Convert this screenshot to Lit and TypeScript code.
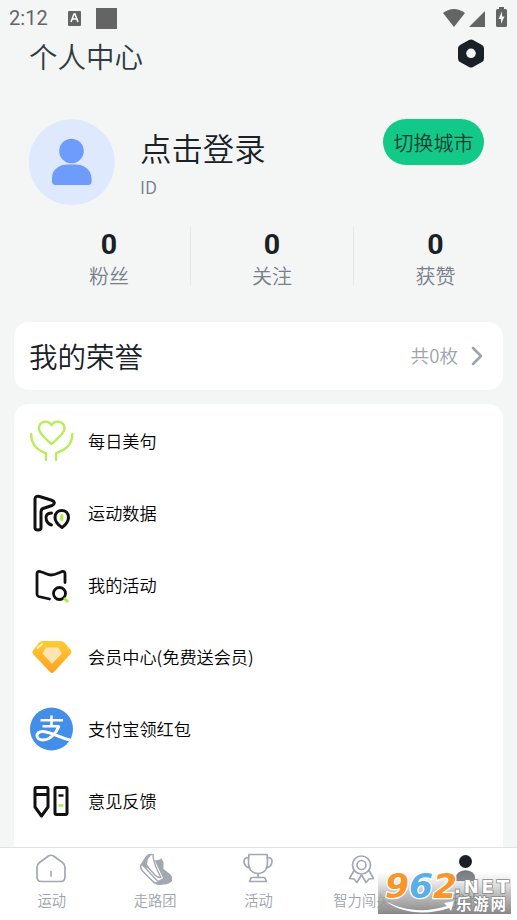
import { LitElement, html, css, svg } from "lit";
import { customElement } from "lit/decorators.js";

const stats = ["粉丝", "关注", "获赞"];

const heart = svg`<g fill="none" stroke="#b5ee55" stroke-width="2.3" stroke-linecap="round" stroke-linejoin="round">
  <path d="M21.500 24Q20 23 14.500 17.500Q9 12 9 8.500C9 1.500 17.500 -1 21.500 5C25.500 -1 34.500 1.500 34.500 8.500Q34.500 12 28.500 17.500Q23 23 21.500 24Z"/>
  <path d="M1.200 14C1.200 25 8 30.500 16 33V40M42.300 14C42.300 25 34.500 30.500 26 33V40"/></g>`;
const route = svg`<g fill="none" stroke="#111" stroke-width="3" stroke-linecap="round" stroke-linejoin="round">
  <path d="M5 36V7C5 4.500 7 4 9.500 4.500L21 8C25 9.300 25.500 12 22 13.500L13 16.500C11.500 17 11 18 11 20V36C11 38.500 5 38.500 5 36Z"/>
  <path d="M21.500 21C16.500 21 15 24.500 16.500 28.500C17.500 31 19.500 32.500 21.500 33"/>
  <path d="M32 35.500C27.500 33 25 28.500 25 25.500C25 16 38.500 16 38.500 25.500C38.500 28.500 36 33 32 35.500Z"/></g>
  <path d="M31.800 23.500V27.500" stroke="#a8ec3c" stroke-width="3" stroke-linecap="round"/>`;
const activity = svg`<g fill="none" stroke="#111" stroke-width="2.800" stroke-linecap="round" stroke-linejoin="round">
  <path d="M19.500 35L8.500 32.500Q7 32 7 30V10Q7 7 10 7.500C17.500 10 17.500 11 21 11C25 11 26 10 32 7.500Q35 7 35 10V18.500"/>
  <circle cx="29.500" cy="29.500" r="6"/></g><path d="M34 34L38 38" stroke="#a8ec3c" stroke-width="2.800"/>`;
const gem = svg`<defs><linearGradient id="gold" x1="0" y1="0" x2="0" y2="1"><stop stop-color="#ffcc35"/><stop offset="1" stop-color="#faa11f"/></linearGradient></defs>
  <path d="M12 5H31Q33 5 34.500 6.500L41 14.500Q42 16 40.500 18L24 36Q22 38 20 36L3 18Q1.500 16 3 14.500L9 6.500Q10 5 12 5Z" fill="url(#gold)"/>
  <path d="M16 11.500H28L32 17.500L22 28L12.500 17.500Z" fill="#ffe3b1"/><path d="M7.500 12L12 8" stroke="#fff5c5" stroke-width="1.800" stroke-linecap="round"/>`;
const pay = svg`<defs><clipPath id="disc"><circle cx="21.500" cy="21" r="21.500"/></clipPath></defs><g clip-path="url(#disc)"><path d="M0 -1H44V44H0Z" fill="#438ee8"/>
  <g fill="none" stroke="#fff"><path d="M10.500 12.300H33M21.500 7.500V18.200M12.500 18.200H29.500" stroke-width="2.500"/>
  <path d="M29 18C26 26 19.500 32 13 32C5 32 5 23.500 12.500 23.500C20.500 23.500 27.500 29 44.500 33.500" stroke-width="3"/></g></g>`;
const pens = svg`<g fill="none" stroke="#111" stroke-width="3" stroke-linejoin="round">
  <path d="M5 9Q5 7.500 6.500 7.500H16.500Q18 7.500 18 9V27L11.500 36L5 27ZM5 14.500H18"/><rect x="25" y="7.500" width="12" height="27" rx="1.500"/></g>
  <path d="M28.500 15.500H33.500" stroke="#111" stroke-width="2.400"/><path d="M28.500 25.500H33.500" stroke="#a8ec3c" stroke-width="2.400"/>`;

const items = [
  { label: "每日美句", icon: heart },
  { label: "运动数据", icon: route },
  { label: "我的活动", icon: activity },
  { label: "会员中心(免费送会员)", icon: gem },
  { label: "支付宝领红包", icon: pay },
  { label: "意见反馈", icon: pens },
];

const tabs = [
  { label: "运动", icon: svg`<path d="M4.500 10.500L13.500 4Q16 2.500 18.500 4L27.500 10.500Q30 12.500 30 15.500V25Q30 29.500 25.500 29.500H6.500Q2 29.500 2 25V15.500Q2 12.500 4.500 10.500ZM16 19.500V24"/>` },
  { label: "走路团", icon: svg`<path d="M22.500 6.500L24.500 10L24.500 17L31 22C36 27 33 32 25 32.500Q19 33 16 31L24 26L15.500 8Q19 9 22.500 6.500Z" fill="#a2a8b2" stroke="none"/><path d="M13 2.500L11 2.500Q8 3 6 7L1.500 14Q1.500 17 3.500 19L15 30.500Q18 32.500 23 32" stroke-width="1.600"/><path d="M14 2.500Q14 11 22 25.500Q19 26 16 23L5 11" stroke-width="1.400"/><path d="M3.500 13L18 28.500Q21 31 26 30" stroke-width="1.400"/><path d="M6 7L3 13L5 15L11 17L8 12L9 7L12 3Q8 3 6 7Z" fill="#a2a8b2" stroke="none"/>` },
  { label: "活动", icon: svg`<path d="M7 2.500H25Q26.500 14 23.500 18Q20.500 21.500 16 21.500Q11.500 21.500 8.500 18Q5.500 14 7 2.500ZM7 5.500Q2 5.500 2 9C2 13.500 5 15.500 8 16M25 5.500Q30 5.500 30 9C30 13.500 27 15.500 24 16M16 21.500V25.500M7.500 29.500H24.500L23 26Q22.700 25.500 22 25.500H10Q9.300 25.500 9 26Z"/>` },
  { label: "智力闯关", icon: svg`<circle cx="16.500" cy="13" r="9"/><circle cx="16.500" cy="13" r="4.500"/><path d="M9 18.500L4.500 26.500L9 27L12 30.500L16 23.500M24 18.500L28.500 26.500L24 27L21 30.500L17 23.500"/>` },
  { label: "我的", icon: svg`<g fill="#192126" stroke="none"><circle cx="16.500" cy="9.500" r="6.500"/><path d="M7 29V26Q7 18.500 16.500 18.500Q26 18.500 26 26V29Z"/></g>`, active: true },
];

@customElement("app-root")
export class AppRoot extends LitElement {
  static styles = css`
    :host { display: flex; flex-direction: column; position: relative; height: 920px; overflow: hidden; background: #f4f6f5; color: #192126; font-family: "Noto Sans CJK SC", sans-serif; font-weight: 350; }
    * { box-sizing: border-box; }
    svg { display: block; flex: none; }
    .status { display: flex; align-items: center; height: 35px; padding: 0 7px 0 9px; color: #646464; font: 400 20px/35px Roboto, sans-serif; }
    .clock { width: 58px; letter-spacing: .1px; padding-top: 1px; }
    .right { margin-left: auto; }
    .header { display: flex; justify-content: space-between; height: 84px; padding: 0 31px 0 29px; }
    .title { font-size: 28.500px; line-height: 42px; color: #303b42; }
    .gear { margin-top: 3px; }
    .profile { display: flex; height: 87px; padding: 0 33px 0 28px; }
    .who { margin-left: 25px; flex: 1; }
    .name { font-size: 31.400px; line-height: 46px; margin-top: 6px; }
    .uid { font-size: 17.500px; line-height: 24px; margin-top: 4px; color: #777e8c; }
    .city { width: 101px; height: 46px; border-radius: 23px; background: #12c988; font-size: 20px; line-height: 47px; text-align: center; color: #1d3b33; }
    .stats { display: grid; grid-template-columns: repeat(3, 163px); margin: 21px 0 0 28px; height: 58px; }
    .stat { height: 58px; text-align: center; border-right: 1.500px solid #e5e7ea; }
    .stat:last-child { border: 0; }
    .num { font: 700 28.500px/35px Roboto, sans-serif; }
    .cap { font-size: 20px; line-height: 28px; color: #777e8c; }
    .honor { display: flex; align-items: center; height: 68px; margin: 37px 14px 14px; padding: 0 17px 0 15px; border-radius: 15px; background: #fff; }
    .honor-title { flex: 1; font-size: 28.500px; line-height: 68px; }
    .count { font-size: 18.600px; line-height: 28px; color: #9da3ae; margin: 0 11px 2px 0; }
    .list { flex: 1; min-height: 0; overflow: hidden; margin: 0 14px; padding-top: 1px; border-radius: 15px 15px 0 0; background: #fff; }
    .item { display: flex; align-items: center; height: 72px; padding-left: 16px; gap: 14px; font-size: 17.150px; color: #000; }
    .item span { margin-bottom: 2px; }
    .item svg { margin-top: 1px; }
    .tabs { display: grid; grid-template-columns: repeat(5, 1fr); height: 73px; background: #fff; border-top: 1px solid #dfe1e2; }
    .tab { display: flex; flex-direction: column; align-items: center; padding-top: 4px; font-size: 14.300px; line-height: 22px; color: #9da3ae; gap: 3.500px; }
    .tab.active { color: #192126; }
    .mark { position: absolute; left: 378px; top: 871px; }
    .digits { font: italic 700 34px "DejaVu Sans", sans-serif; }
    .net { font: 700 18px "DejaVu Sans", sans-serif; }
    .site { font: 700 15.500px "Noto Sans CJK SC", sans-serif; }
  `;

  render() {
    return html`
      <div class="status"><span class="clock">2:12</span>
        <svg width="50" height="22"><rect x="1" y="4" width="13" height="15" rx="1" fill="#646464"/><path d="M4 15L7 7H8L11 15M5.500 12H9.500" stroke="#fff" stroke-width="1.500" fill="none"/><path d="M29 1H50V22H29Z" fill="#646464"/></svg>
        <svg class="right" width="68" height="22" fill="#646464"><path d="M1 6Q12 -2 23 6L12 20Z"/><path d="M43 4V20H27Z"/><path d="M54 3.500Q54 2 55.500 2H57V0H62V2H63.500Q65 2 65 3.500V18.500Q65 20 63.500 20H55.500Q54 20 54 18.500Z"/><path d="M60 4.500L56.500 12H59V17L62.500 9.500H60Z" fill="#f4f6f5"/></svg>
      </div>
      <div class="header"><div class="title">个人中心</div>
        <svg class="gear" width="30" height="31"><path d="M13 2Q15 1 17 2L26 7Q28 8 28 10.500V20.500Q28 23 26 24L17 29Q15 30 13 29L4 24Q2 23 2 20.500V10.500Q2 8 4 7Z" fill="#192126"/><circle cx="15" cy="15.300" r="4.800" fill="#f4f6f5"/></svg>
      </div>
      <div class="profile">
        <svg width="87" height="87"><circle cx="43.800" cy="43.300" r="43" fill="#dee9fe"/><g fill="#6e9cfd"><circle cx="43.500" cy="32" r="12.300"/><path d="M24 59C24 50 32 45.500 39 45.500H48C55 45.500 63.500 50 63.500 60V63Q63.500 66 60 66H28Q24 66 24 63Z"/></g></svg>
        <div class="who"><div class="name">点击登录</div><div class="uid">ID</div></div>
        <div class="city">切换城市</div>
      </div>
      <div class="stats">${stats.map((s) => html`<div class="stat"><div class="num">0</div><div class="cap">${s}</div></div>`)}</div>
      <div class="honor"><div class="honor-title">我的荣誉</div><div class="count">共0枚</div>
        <svg width="17" height="22" fill="none" stroke="#9da3ae" stroke-width="2.500" stroke-linecap="round" stroke-linejoin="round"><path d="M4 3L12 11L4 19"/></svg></div>
      <div class="list">${items.map((i) => html`<div class="item"><svg width="44" height="44" viewBox="0 0 44 44" overflow="visible">${i.icon}</svg><span>${i.label}</span></div>`)}</div>
      <div class="tabs">${tabs.map((t) => html`<div class="tab ${t.active ? "active" : ""}"><svg width="33" height="33" viewBox="0 0 33 33" fill="none" stroke="#a2a8b2" stroke-width="1.700" stroke-linejoin="round" stroke-linecap="round">${t.icon}</svg><span>${t.label}</span></div>`)}</div>
      <svg class="mark" width="133" height="43" overflow="visible">
        <defs><linearGradient id="shade" x1="0" y1="0" x2="0" y2="1"><stop stop-color="#fff" stop-opacity=".4"/><stop offset=".5" stop-color="#b0b0b0" stop-opacity=".75"/><stop offset="1" stop-color="#808080" stop-opacity=".95"/></linearGradient></defs>
        <rect width="133" height="43" fill="url(#shade)"/>
        <path d="M8 30C24 40 48 42 69 35L66 32L76 30L73 40L71 37C48 45 22 42 8 30Z" fill="#fff"/>
        <g class="digits" stroke="#fff" stroke-width="2.500" paint-order="stroke" stroke-linejoin="round"><text x="7" y="27" textLength="24" lengthAdjust="spacingAndGlyphs" fill="#f8962b">9</text><text x="31" y="27" textLength="24" lengthAdjust="spacingAndGlyphs" fill="#59afe6">6</text><text x="55" y="27" textLength="24" lengthAdjust="spacingAndGlyphs" fill="#f8962b">2</text></g>
        <g fill="#fff" stroke="#888" stroke-width="1.600" paint-order="stroke"><text class="net" x="76" y="22" textLength="55">.NET</text><text class="site" x="78" y="39" textLength="50">乐游网</text></g>
      </svg>`;
  }
}
